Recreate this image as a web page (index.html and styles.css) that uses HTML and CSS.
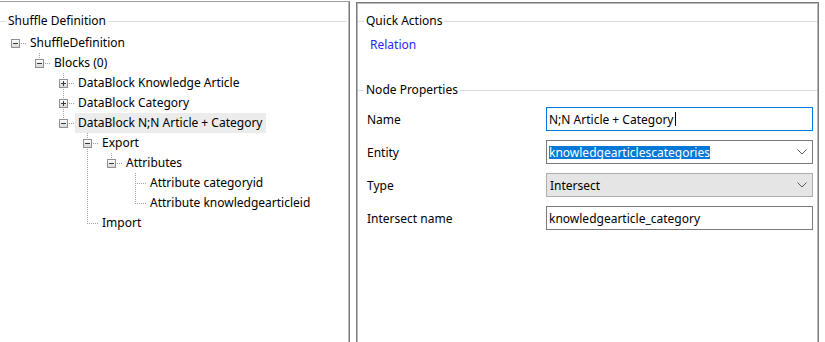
FILE: index.html
```html
<!DOCTYPE html>
<html lang="en">
<head>
    <meta charset="UTF-8">
    <title>Shuffle Definition</title>
    <link rel="stylesheet" href="styles.css">
</head>
<body>

<div class="window">
    <section class="pane pane-left">
        <div class="group-title"><span>Shuffle Definition</span></div>
        <ul class="tree">
            <li class="node">
                <span class="cell root"><span class="toggle"></span></span>
                <span class="label">ShuffleDefinition</span>
            </li>
            <li class="node">
                <span class="cell"></span>
                <span class="cell elbow"><span class="toggle"></span></span>
                <span class="label">Blocks (0)</span>
            </li>
            <li class="node">
                <span class="cell"></span><span class="cell"></span>
                <span class="cell tee"><span class="toggle closed"></span></span>
                <span class="label">DataBlock Knowledge Article</span>
            </li>
            <li class="node">
                <span class="cell"></span><span class="cell"></span>
                <span class="cell tee"><span class="toggle closed"></span></span>
                <span class="label">DataBlock Category</span>
            </li>
            <li class="node selected">
                <span class="cell"></span><span class="cell"></span>
                <span class="cell elbow"><span class="toggle"></span></span>
                <span class="label">DataBlock N;N Article + Category</span>
            </li>
            <li class="node">
                <span class="cell"></span><span class="cell"></span><span class="cell"></span>
                <span class="cell tee"><span class="toggle"></span></span>
                <span class="label">Export</span>
            </li>
            <li class="node">
                <span class="cell"></span><span class="cell"></span><span class="cell"></span>
                <span class="cell pipe"></span>
                <span class="cell elbow"><span class="toggle"></span></span>
                <span class="label">Attributes</span>
            </li>
            <li class="node">
                <span class="cell"></span><span class="cell"></span><span class="cell"></span>
                <span class="cell pipe"></span><span class="cell"></span>
                <span class="cell tee"></span>
                <span class="label">Attribute categoryid</span>
            </li>
            <li class="node">
                <span class="cell"></span><span class="cell"></span><span class="cell"></span>
                <span class="cell pipe"></span><span class="cell"></span>
                <span class="cell elbow"></span>
                <span class="label">Attribute knowledgearticleid</span>
            </li>
            <li class="node">
                <span class="cell"></span><span class="cell"></span><span class="cell"></span>
                <span class="cell elbow"></span>
                <span class="label">Import</span>
            </li>
        </ul>
    </section>

    <section class="pane pane-right">
        <div class="group-title"><span>Quick Actions</span></div>
        <a class="link" href="#">Relation</a>

        <div class="group-title node-props"><span>Node Properties</span></div>
        <div class="props">
            <div class="prop">
                <span class="prop-label">Name</span>
                <div class="field focused"><span>N;N Article + Category</span><span class="caret"></span></div>
            </div>
            <div class="prop">
                <span class="prop-label">Entity</span>
                <div class="field combo">
                    <span class="value"><span class="selection">knowledgearticlescategories</span></span>
                    <svg class="chevron" width="10" height="6" viewBox="0 0 10 6"><polyline points="0.5,0.5 5,5 9.5,0.5" fill="none" stroke="#5a5a5a" stroke-width="1"/></svg>
                </div>
            </div>
            <div class="prop">
                <span class="prop-label">Type</span>
                <div class="field combo readonly">
                    <span class="value">Intersect</span>
                    <svg class="chevron" width="10" height="6" viewBox="0 0 10 6"><polyline points="0.5,0.5 5,5 9.5,0.5" fill="none" stroke="#5a5a5a" stroke-width="1"/></svg>
                </div>
            </div>
            <div class="prop">
                <span class="prop-label">Intersect name</span>
                <div class="field"><span>knowledgearticle_category</span></div>
            </div>
        </div>
    </section>
</div>

</body>
</html>
```

FILE: styles.css
```css
:root {
    --dot-v: repeating-linear-gradient(to bottom, #a0a0a0 0 1px, transparent 1px 2px);
    --dot-h: repeating-linear-gradient(to right, #a0a0a0 0 1px, transparent 1px 2px);
}
body {
    margin: 0;
    font-family: "Segoe UI", "Noto Sans", sans-serif;
    font-size: 12px;
    color: #000;
    background: #fff;
}
.window {
    display: flex;
    height: 342px;
    overflow: hidden;
}
.pane {
    box-sizing: border-box;
    height: 400px;
    flex: none;
}
.pane-left {
    width: 350px;
    margin-top: 1px;
    padding: 11px 2px 0 0;
    border-top: 1px solid #a0a0a0;
    border-right: 1px solid #7a7a7a;
    box-shadow: inset -1px 0 #b9b9b9;
}
.pane-right {
    width: 463px;
    margin: 2px 0 0 6px;
    padding: 10px 1px 0 1px;
    border: 1px solid #7a7a7a;
    border-bottom: none;
    box-shadow: inset 1px 1px #b9b9b9, inset -1px 0 #b9b9b9;
}

/* group box caption with the frame line on both sides */
.group-title {
    display: flex;
    align-items: center;
    height: 16px;
}
.group-title::before {
    content: "";
    width: 6px;
    height: 1px;
    background: #dcdcdc;
}
.group-title::after {
    content: "";
    flex: 1;
    height: 1px;
    background: #dcdcdc;
}
.group-title span {
    padding: 0 2px;
    line-height: 16px;
    white-space: nowrap;
}

/* tree view */
.tree {
    list-style: none;
    margin: 4px 0 0;
    padding: 0 0 0 3px;
}
.node {
    display: flex;
    height: 20px;
}
.cell {
    flex: none;
    width: 24px;
    height: 20px;
}
.cell.root {
    background: var(--dot-h) 12px 10px / 12px 1px no-repeat;
}
.cell.elbow {
    background:
        var(--dot-h) 12px 10px / 12px 1px no-repeat,
        var(--dot-v) 12px 0 / 1px 10px no-repeat;
}
.cell.tee {
    background:
        var(--dot-h) 12px 10px / 12px 1px no-repeat,
        var(--dot-v) 12px 0 / 1px 20px no-repeat;
}
.cell.pipe {
    background: var(--dot-v) 12px 0 / 1px 20px no-repeat;
}
.toggle {
    display: block;
    box-sizing: border-box;
    width: 9px;
    height: 9px;
    margin: 6px 0 0 8px;
    border: 1px solid #919191;
    background:
        linear-gradient(#3a3a3a, #3a3a3a) center / 5px 1px no-repeat,
        linear-gradient(#fcfcfc, #d8d8d8);
}
.toggle.closed {
    background:
        linear-gradient(#3a3a3a, #3a3a3a) center / 5px 1px no-repeat,
        linear-gradient(#3a3a3a, #3a3a3a) center / 1px 5px no-repeat,
        linear-gradient(#fcfcfc, #d8d8d8);
}
.label {
    padding: 0 3px;
    line-height: 20px;
    white-space: nowrap;
}
.node.selected .label {
    background: #ececec;
}

/* property panel */
.link {
    display: block;
    margin: 8px 0 0 12px;
    line-height: 16px;
    color: #1f1fff;
    text-decoration: none;
}
.node-props {
    margin-top: 29px;
}
.props {
    display: flex;
    flex-direction: column;
    gap: 9px;
    margin-top: 9px;
    padding-left: 9px;
}
.prop {
    display: flex;
    align-items: center;
    height: 24px;
}
.prop-label {
    width: 179px;
    flex: none;
}
.field {
    box-sizing: border-box;
    display: flex;
    align-items: center;
    width: 267px;
    height: 24px;
    padding-left: 2px;
    border: 1px solid #7a7a7a;
    background: #fff;
    white-space: nowrap;
}
.field.focused {
    border-color: #0078d7;
}
.caret {
    display: inline-block;
    width: 1px;
    height: 14px;
    margin-left: 1px;
    background: #000;
}
.combo .value {
    flex: 1;
}
.selection {
    display: inline-block;
    line-height: 13px;
    background: #0078d7;
    color: #fff;
}
.combo.readonly {
    padding-left: 3px;
    background: #e5e5e5;
    border-color: #adadad;
}
.chevron {
    margin-right: 5px;
}
```
